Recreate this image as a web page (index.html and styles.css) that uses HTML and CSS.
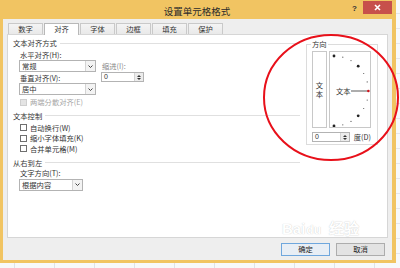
FILE: index.html
```html
<!DOCTYPE html>
<html lang="zh-CN">
<head>
    <meta charset="UTF-8">
    <title>设置单元格格式</title>
    <link rel="stylesheet" href="styles.css">
</head>
<body>
    <div class="screen">
        <div class="dialog">
            <div class="titlebar">
                <span class="title">设置单元格格式</span>
                <span class="help">?</span>
                <span class="close">
                    <svg width="7" height="7" viewBox="0 0 7 7"><path d="M1 1 L6 6 M6 1 L1 6" stroke="#fff" stroke-width="1.6"/></svg>
                </span>
            </div>
            <div class="dialog-body">
                <div class="tabs">
                    <div class="tab">数字</div>
                    <div class="tab active">对齐</div>
                    <div class="tab">字体</div>
                    <div class="tab">边框</div>
                    <div class="tab">填充</div>
                    <div class="tab">保护</div>
                </div>
                <div class="panel">
                    <div class="left-col">
                        <div class="sec-title">文本对齐方式</div>
                        <div class="align-grid">
                            <div class="lbl">水平对齐(<u>H</u>):</div>
                            <div></div>
                            <div class="select">
                                <span class="sel-text">常规</span>
                                <span class="sel-arrow"><svg width="5" height="3" viewBox="0 0 5 3"><path d="M0.5 0.5 L2.5 2.5 L4.5 0.5" stroke="#444" fill="none"/></svg></span>
                            </div>
                            <div class="lbl muted">缩进(<u>I</u>):</div>
                            <div class="lbl">垂直对齐(<u>V</u>):</div>
                            <div class="spin-input small">
                                <span class="spin-val">0</span>
                                <span class="spin-btns"><i class="up"></i><i class="down"></i></span>
                            </div>
                            <div class="select">
                                <span class="sel-text">居中</span>
                                <span class="sel-arrow"><svg width="5" height="3" viewBox="0 0 5 3"><path d="M0.5 0.5 L2.5 2.5 L4.5 0.5" stroke="#444" fill="none"/></svg></span>
                            </div>
                        </div>
                        <div class="check disabled first"><span class="box"></span><span>两端分散对齐(<u>E</u>)</span></div>

                        <div class="sec-title mid">文本控制</div>
                        <div class="check first"><span class="box"></span><span>自动换行(<u>W</u>)</span></div>
                        <div class="check"><span class="box"></span><span>缩小字体填充(<u>K</u>)</span></div>
                        <div class="check"><span class="box"></span><span>合并单元格(<u>M</u>)</span></div>

                        <div class="sec-title last">从右到左</div>
                        <div class="lbl dir-lbl">文字方向(<u>T</u>):</div>
                        <div class="select wide">
                            <span class="sel-text">根据内容</span>
                            <span class="sel-arrow"><svg width="5" height="3" viewBox="0 0 5 3"><path d="M0.5 0.5 L2.5 2.5 L4.5 0.5" stroke="#444" fill="none"/></svg></span>
                        </div>
                    </div>

                    <fieldset class="orient">
                        <legend>方向</legend>
                        <div class="orient-boxes">
                            <div class="vert-box">文<br>本</div>
                            <div class="dial">
                                <svg width="40" height="75" viewBox="0 0 40 75">
                                    <g fill="#222">
                                        <circle cx="4" cy="4" r="1.4"/>
                                        <circle cx="28.2" cy="14.2" r="1.4"/>
                                        <circle cx="28.2" cy="63.8" r="1.4"/>
                                        <circle cx="4" cy="74" r="1.4"/>
                                    </g>
                                    <g fill="#555">
                                        <circle cx="12.8" cy="5.2" r="0.6"/>
                                        <circle cx="21" cy="8.6" r="0.6"/>
                                        <circle cx="33.7" cy="21.5" r="0.6"/>
                                        <circle cx="37.2" cy="29.9" r="0.6"/>
                                        <circle cx="37.2" cy="48.1" r="0.6"/>
                                        <circle cx="33.7" cy="56.5" r="0.6"/>
                                        <circle cx="21" cy="69.4" r="0.6"/>
                                        <circle cx="12.8" cy="72.8" r="0.6"/>
                                    </g>
                                    <line x1="21" y1="39" x2="38" y2="39" stroke="#8a8a8a" stroke-width="1.4"/>
                                    <circle cx="38.4" cy="39" r="1.3" fill="#d0111b"/>
                                    <text x="6" y="42" class="dial-text">文本</text>
                                </svg>
                            </div>
                        </div>
                        <div class="deg-row">
                            <div class="spin-input deg">
                                <span class="spin-val">0</span>
                                <span class="spin-btns"><i class="up"></i><i class="down"></i></span>
                            </div>
                            <span class="lbl">度(<u>D</u>)</span>
                        </div>
                    </fieldset>
                </div>
                <div class="buttons">
                    <button class="btn focus">确定</button>
                    <button class="btn">取消</button>
                </div>
            </div>
        </div>

        <svg class="annot" width="400" height="268" viewBox="0 0 400 268">
            <ellipse cx="331" cy="97.5" rx="67" ry="62.5" fill="none" stroke="#e8101a" stroke-width="2"/>
        </svg>
        <div class="watermark">Bai<span class="paw">du</span>经验</div>
    </div>
</body>
</html>
```

FILE: styles.css
```css
body {
    margin: 0;
    padding: 0;
    font-family: "Noto Sans CJK SC", "Liberation Sans", sans-serif;
    color: #333;
    text-autospace: no-autospace;
}

.screen {
    position: relative;
    width: 400px;
    height: 268px;
    overflow: hidden;
    background-color: #f7f9fb;
    background-image:
        repeating-linear-gradient(90deg, transparent 0 14px, #dfe3e7 14px 15px, transparent 15px 40px),
        repeating-linear-gradient(0deg, transparent 0 14px, #e3e6ea 14px 15px);
}

.dialog {
    width: 396px;
    height: 263px;
    background-color: #f1c462;
    box-sizing: border-box;
    display: flex;
    flex-direction: column;
}

.titlebar {
    display: flex;
    align-items: flex-start;
    height: 19px;
}

.title {
    flex: 1;
    text-align: center;
    padding-left: 42px;
    font-size: 9.5px;
    line-height: 22px;
    color: #2b2b2b;
}

.help {
    font-family: "Liberation Sans", sans-serif;
    font-size: 8px;
    font-weight: bold;
    color: #333;
    line-height: 18px;
    margin-right: 6px;
}

.close {
    display: flex;
    align-items: center;
    justify-content: center;
    width: 29px;
    height: 13px;
    margin-top: 1px;
    margin-right: 4px;
    background-color: #c7504b;
}

.dialog-body {
    flex: 1;
    margin: 0 4px 3px 3px;
    padding: 4px 4px 0 4px;
    background-color: #eeeeee;
    display: flex;
    flex-direction: column;
}

.tabs {
    display: flex;
    gap: 1px;
    padding-left: 1px;
    height: 11px;
}

.tab {
    width: 35px;
    height: 11px;
    box-sizing: border-box;
    border: 1px solid #c9c9c9;
    border-bottom: none;
    background: linear-gradient(#f4f4f4, #e9e9e9);
    font-size: 7.3px;
    line-height: 10px;
    text-align: center;
    color: #333;
}

.tab.active {
    background: #fff;
    border-color: #b8b8b8;
    height: 12px;
    position: relative;
    z-index: 1;
}

.panel {
    height: 204px;
    box-sizing: border-box;
    border: 1px solid #d6d6d6;
    background-color: #fff;
    display: flex;
}

.left-col {
    width: 287px;
    padding: 3px 0 0 5px;
    display: flex;
    flex-direction: column;
}

.sec-title {
    display: flex;
    align-items: center;
    gap: 3px;
    height: 10px;
    font-size: 7.3px;
    line-height: 10px;
}

.sec-title::after {
    content: '';
    flex: 1;
    height: 1px;
    background-color: #e0e0e0;
}

.sec-title.mid {
    margin-top: 3px;
}

.sec-title.last {
    margin-top: 3.5px;
}

.lbl {
    font-size: 7.3px;
    line-height: 10px;
    white-space: nowrap;
}

u {
    text-decoration: none;
}

.muted {
    color: #8a8a8a;
}

.align-grid {
    display: grid;
    grid-template-columns: 77px 44px;
    grid-template-rows: 10px 12px 11px 12px;
    column-gap: 5px;
    margin: 2px 0 0 6px;
}

.align-grid .lbl {
    padding-left: 1px;
    align-self: center;
}

.select {
    display: flex;
    height: 12px;
    box-sizing: border-box;
    border: 1px solid #b3b3b3;
    background-color: #fff;
}

.select.wide {
    width: 64px;
    margin: 1px 0 0 6px;
}

.sel-text {
    flex: 1;
    font-size: 7.3px;
    line-height: 10px;
    padding-left: 2px;
}

.sel-arrow {
    width: 9px;
    display: flex;
    align-items: center;
    justify-content: center;
    border-left: 1px solid #d4d4d4;
    background-color: #f3f3f3;
}

.spin-input {
    display: flex;
    height: 10px;
    box-sizing: border-box;
    border: 1px solid #b3b3b3;
    background-color: #fff;
}

.spin-input.small {
    width: 43px;
    align-self: start;
}

.spin-input.deg {
    width: 41px;
}

.spin-val {
    flex: 1;
    font-family: "Liberation Sans", sans-serif;
    font-size: 7px;
    line-height: 8px;
    padding-left: 2px;
}

.spin-btns {
    width: 8px;
    display: flex;
    flex-direction: column;
    justify-content: center;
    align-items: center;
    gap: 1px;
    border-left: 1px solid #d4d4d4;
    background-color: #ececec;
}

.spin-btns i {
    width: 0;
    height: 0;
    border-left: 2px solid transparent;
    border-right: 2px solid transparent;
}

.spin-btns .up {
    border-bottom: 2px solid #333;
}

.spin-btns .down {
    border-top: 2px solid #333;
}

.check {
    display: flex;
    align-items: center;
    gap: 3px;
    height: 10.5px;
    padding-left: 7px;
    font-size: 7.3px;
    line-height: 10px;
    white-space: nowrap;
}

.check.first {
    margin-top: 2px;
}

.check .box {
    width: 7px;
    height: 7px;
    box-sizing: border-box;
    border: 1px solid #6f6f6f;
    background-color: #fff;
}

.check.disabled {
    color: #a6a6a6;
}

.check.disabled .box {
    border-color: #cfcfcf;
    background-color: #e4e4e4;
}

.dir-lbl {
    padding-left: 7px;
    height: 10px;
}

.orient {
    margin: 4px 0 0 6px;
    padding: 0 6px 3px 5px;
    width: 72px;
    height: 106px;
    box-sizing: border-box;
    border: 1px solid #dcdcdc;
    min-width: 0;
}

.orient legend {
    padding: 0 1px;
    margin-left: -1px;
    font-size: 7.3px;
    line-height: 10px;
}

.orient-boxes {
    display: flex;
    gap: 2px;
    margin-top: 2px;
    height: 77px;
}

.vert-box {
    width: 17px;
    box-sizing: border-box;
    border: 1px solid #c8c8c8;
    display: flex;
    align-items: center;
    justify-content: center;
    text-align: center;
    font-size: 7.3px;
    line-height: 9px;
}

.dial {
    width: 42px;
    box-sizing: border-box;
    border: 1px solid #c8c8c8;
}

.dial svg {
    display: block;
}

.dial-text {
    font-family: "Noto Sans CJK SC", sans-serif;
    font-size: 7.3px;
    fill: #333;
}

.deg-row {
    display: flex;
    align-items: center;
    gap: 4px;
    margin-top: 4px;
}

.buttons {
    display: flex;
    justify-content: flex-end;
    gap: 6px;
    padding: 5px 3px 0 0;
}

.btn {
    width: 49px;
    height: 13px;
    padding: 0;
    border: 1px solid #adadad;
    background-color: #e3e3e3;
    font-family: "Noto Sans CJK SC", sans-serif;
    font-size: 7.3px;
    line-height: 11px;
    color: #222;
}

.btn.focus {
    border-color: #6fa7dd;
    background-color: #e8eef5;
}

.annot {
    position: absolute;
    left: 0;
    top: 0;
}

.watermark {
    position: absolute;
    left: 282px;
    top: 220px;
    font-family: "Liberation Sans", sans-serif;
    font-weight: bold;
    font-size: 15px;
    line-height: 18px;
    color: #fff;
    text-shadow: 0 0 1px rgba(150, 150, 150, 0.6);
}

.watermark .paw {
    display: inline-block;
    margin: 0 8px 0 1px;
    font-size: 12px;
}
```
